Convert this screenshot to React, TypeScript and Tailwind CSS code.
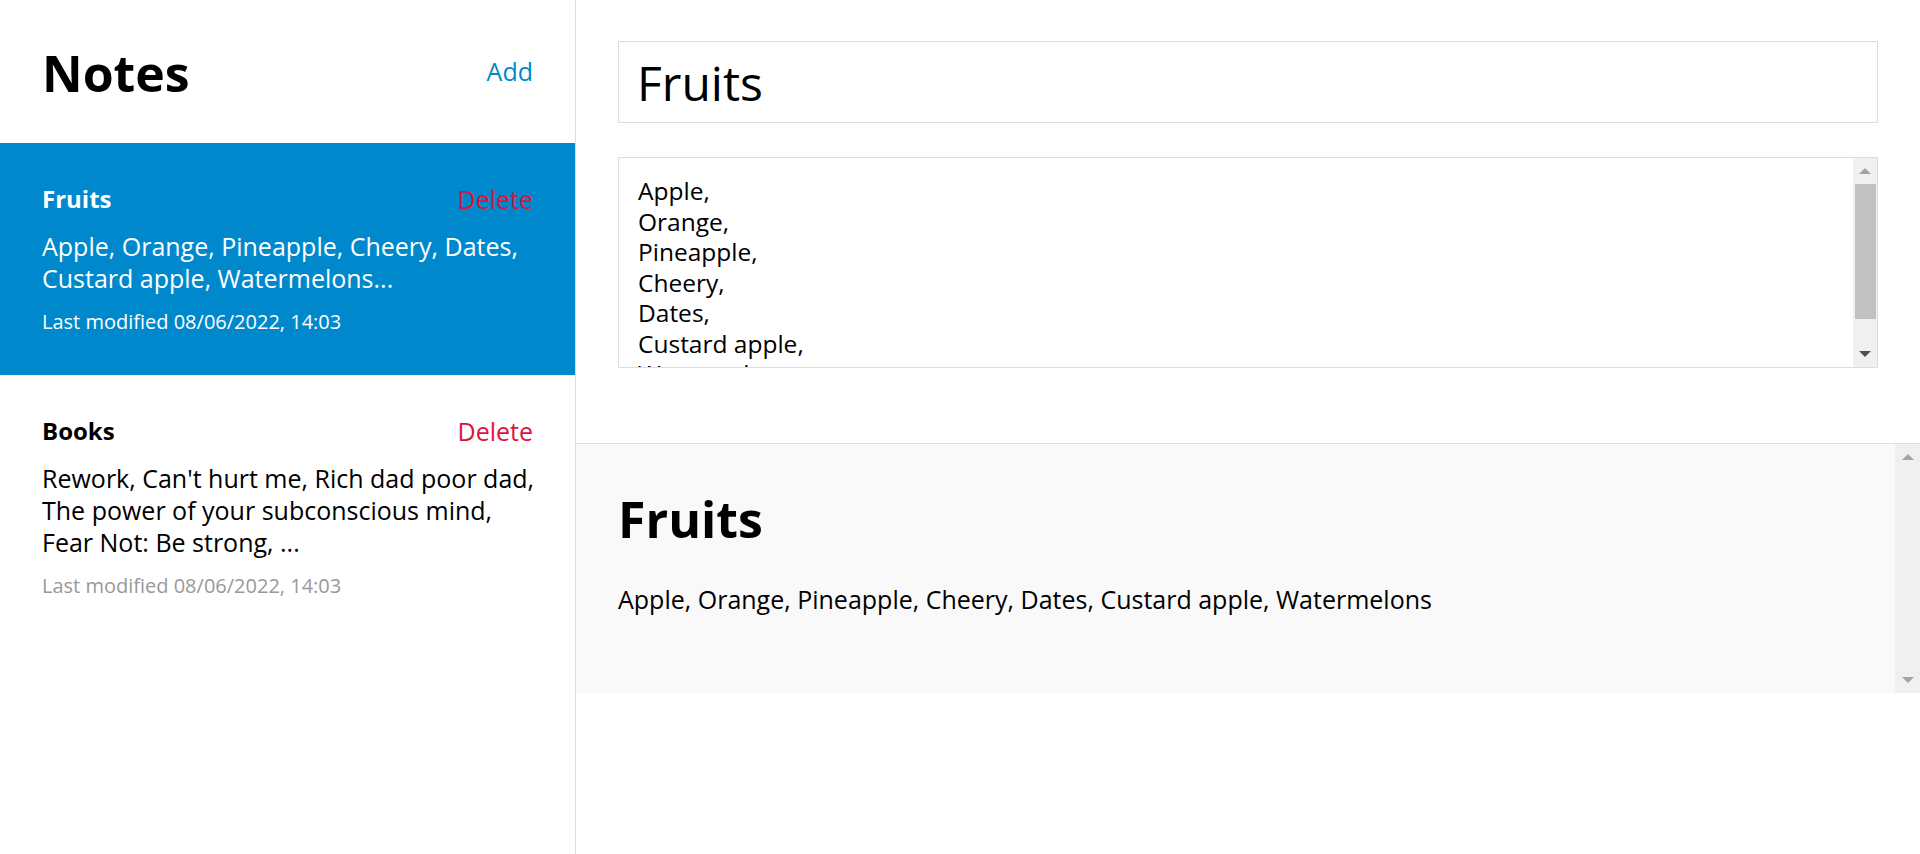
import { useState } from "react";

type Note = {
  id: number;
  title: string;
  lines: string[];
  modified: string;
};

const notes: Note[] = [
  {
    id: 1,
    title: "Fruits",
    lines: ["Apple, Orange, Pineapple, Cheery, Dates,", "Custard apple, Watermelons..."],
    modified: "Last modified 08/06/2022, 14:03",
  },
  {
    id: 2,
    title: "Books",
    lines: [
      "Rework, Can't hurt me, Rich dad poor dad,",
      "The power of your subconscious mind,",
      "Fear Not: Be strong, ...",
    ],
    modified: "Last modified 08/06/2022, 14:03",
  },
];

const body = "Apple,\nOrange,\nPineapple,\nCheery,\nDates,\nCustard apple,\nWatermelons";

function Arrow({ up, dark }: { up?: boolean; dark?: boolean }) {
  return (
    <svg width="12" height="6" viewBox="0 0 12 6" className="block">
      <polygon
        points={up ? "6,0 12,6 0,6" : "0,0 12,0 6,6"}
        fill={dark ? "#505050" : "#a3a3a3"}
      />
    </svg>
  );
}

export default function App() {
  const [activeId, setActiveId] = useState(1);
  const [title, setTitle] = useState("Fruits");
  const [text, setText] = useState(body);

  return (
    <div className="flex h-[854px] w-full bg-white text-black font-['Open_Sans','Noto_Sans',sans-serif]">
      {/* Sidebar */}
      <aside className="w-[576px] shrink-0 border-r border-[#ddd] flex flex-col">
        <div className="h-[143px] px-[42px] flex justify-between items-start">
          <h1 className="mt-[37px] text-[50px] leading-[72px] font-bold">Notes</h1>
          <button className="mt-[55px] text-[25px] leading-[32px] text-[#0088cc]">Add</button>
        </div>
        {notes.map((n) => {
          const active = n.id === activeId;
          return (
            <div
              key={n.id}
              onClick={() => setActiveId(n.id)}
              className={`px-[42px] pt-[40px] pb-[40px] cursor-pointer ${
                active ? "bg-[#0088cc] text-white" : "text-black"
              }`}
            >
              <div className="flex justify-between items-center">
                <span className="text-[24px] leading-[32px] font-bold">{n.title}</span>
                <button className="text-[25px] leading-[32px] text-[#dc143c]">Delete</button>
              </div>
              <p className="mt-[15px] text-[25px] leading-[32px]">
                {n.lines.map((l) => (
                  <span key={l} className="block whitespace-nowrap">
                    {l}
                  </span>
                ))}
              </p>
              <p
                className={`mt-[15px] text-[20px] leading-[26px] ${
                  active ? "text-white" : "text-[#999]"
                }`}
              >
                {n.modified}
              </p>
            </div>
          );
        })}
      </aside>

      {/* Main */}
      <main className="flex-1 flex flex-col">
        <div className="px-[42px] pt-[41px] h-[443px]">
          <input
            value={title}
            onChange={(e) => setTitle(e.target.value)}
            className="w-full h-[82px] border border-[#ddd] px-[18px] text-[48px] outline-none"
          />
          <div className="mt-[34px] h-[211px] border border-[#ddd] flex">
            <textarea
              value={text}
              onChange={(e) => setText(e.target.value)}
              className="flex-1 resize-none overflow-hidden outline-none pl-[19px] pt-[18px] text-[24.5px] leading-[30.5px]"
            />
            <div className="w-[24px] bg-[#f0f0f0] flex flex-col items-center">
              <div className="h-[26px] flex items-center">
                <Arrow up />
              </div>
              <div className="w-[21px] h-[135px] bg-[#c1c1c1]" />
              <div className="flex-1" />
              <div className="h-[26px] flex items-center">
                <Arrow dark />
              </div>
            </div>
          </div>
        </div>

        <div className="h-[250px] border-t border-[#ddd] bg-[#f9f9f9] flex">
          <div className="flex-1 px-[42px] pt-[39px]">
            <h1 className="text-[50px] leading-[72px] font-bold">{title}</h1>
            <p className="mt-[28px] text-[25px] leading-[32px]">
              {text.split("\n").join(" ")}
            </p>
          </div>
          <div className="w-[25px] bg-[#f0f0f0] flex flex-col items-center justify-between py-[10px]">
            <Arrow up />
            <Arrow />
          </div>
        </div>
      </main>
    </div>
  );
}
